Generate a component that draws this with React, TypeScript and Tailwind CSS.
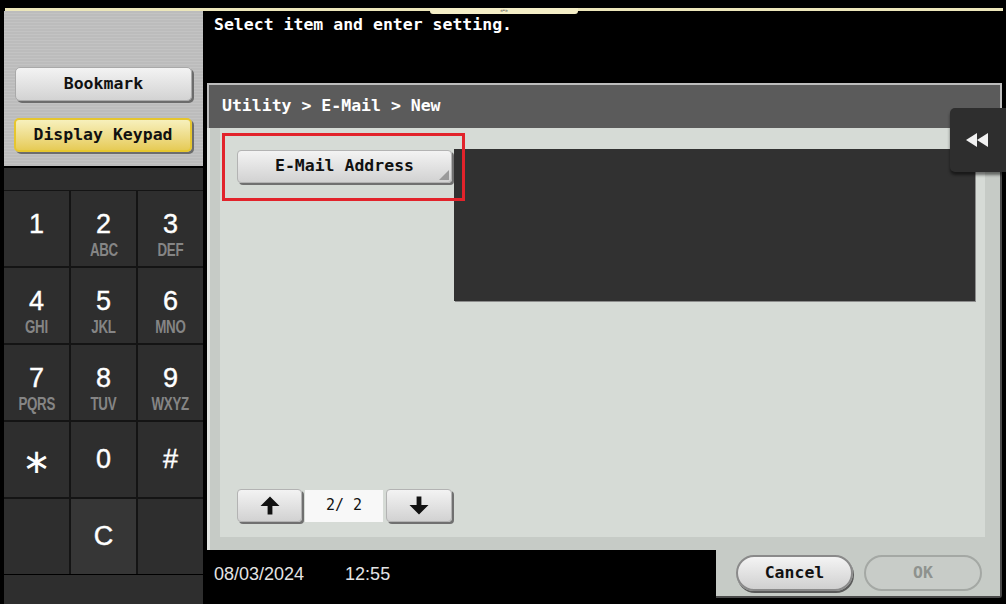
import React from "react";

const mono = "font-['DejaVu_Sans_Mono',monospace] font-bold";

// keypad layout, top to bottom
const digitKeys = [
  { d: "1", s: "" },
  { d: "2", s: "ABC" },
  { d: "3", s: "DEF" },
  { d: "4", s: "GHI" },
  { d: "5", s: "JKL" },
  { d: "6", s: "MNO" },
  { d: "7", s: "PQRS" },
  { d: "8", s: "TUV" },
  { d: "9", s: "WXYZ" },
];

const bottomKeys = [
  { d: "∗", big: true },
  { d: "0" },
  { d: "#" },
  { d: "" },
  { d: "C", lit: true },
  { d: "" },
];

function UpArrow() {
  return (
    <svg width="20" height="19" viewBox="0 0 20 19">
      <path d="M10 0.5 L19.5 10 H12.4 V18.5 H7.6 V10 H0.5 Z" fill="#111" />
    </svg>
  );
}

function DownArrow() {
  return (
    <svg width="20" height="19" viewBox="0 0 20 19">
      <path d="M10 18.5 L19.5 9 H12.4 V0.5 H7.6 V9 H0.5 Z" fill="#111" />
    </svg>
  );
}

function Rewind() {
  return (
    <svg width="22" height="14" viewBox="0 0 22 14">
      <path d="M11 0 L0 7 L11 14 Z" fill="#f2f2f2" />
      <path d="M22 0 L11 7 L22 14 Z" fill="#f2f2f2" />
    </svg>
  );
}

export default function App() {
  return (
    <div className="relative w-[1006px] h-[604px] overflow-hidden bg-black flex flex-col font-['Liberation_Sans',sans-serif]">
      {/* top strip */}
      <div className="h-[8px] shrink-0" />
      <div className="relative h-[3px] shrink-0 ml-[5px] mr-[3px] bg-[#ece6ba]">
        <div className="absolute left-[425px] top-0 w-[148px] h-[6px] bg-[#f4eec6] rounded-b-[3px] flex justify-center">
          <span className="text-[5px] leading-none text-[#555]">«•»</span>
        </div>
      </div>

      <div className="flex flex-1 min-h-0">
        {/* Left column */}
        <div className="w-[206px] shrink-0 flex flex-col pl-[4px] pr-[3px]">
          <div className="h-[155px] shrink-0 flex flex-col pt-[56px] pl-[10px] pr-[11px] gap-[17px] bg-[repeating-linear-gradient(0deg,#bcbcbc_0px,#bcbcbc_2px,#c3c3c3_2px,#c3c3c3_3px)]">
            <div className={`h-[34px] ml-[1px] flex items-center justify-center rounded-[5px] border border-[#a9a9a9] bg-linear-to-b from-[#f3f3f3] to-[#d3d3d3] shadow-[2px_2px_0_#6c6c6c] text-[16.5px] text-[#111] ${mono}`}>
              Bookmark
            </div>
            <div className={`h-[34px] flex items-center justify-center rounded-[5px] border-2 border-[#e6c62e] bg-linear-to-b from-[#f7f0bc] to-[#e6cb55] shadow-[2px_2px_0_#6c6c6c] text-[16.5px] text-[#111] ${mono}`}>
              Display Keypad
            </div>
          </div>
          <div className="h-[2px] shrink-0" />
          <div className="h-[22px] shrink-0 bg-[#2d2d2d]" />
          <div className="grid grid-cols-3 gap-[2px] pt-[1px] shrink-0 bg-[#141414]">
            {digitKeys.map((k) => (
              <div key={k.d} className="h-[75px] bg-[#2e2e2e] flex flex-col items-center pt-[20px]">
                <span className="text-[27px] leading-none text-white [-webkit-text-stroke:0.4px_white]">{k.d}</span>
                <span className="mt-[3px] text-[18px] leading-none font-bold text-[#858585] scale-x-[0.74] tracking-[-0.4px]">{k.s}</span>
              </div>
            ))}
            {bottomKeys.map((k, i) => (
              <div
                key={i}
                className={`h-[75px] flex items-center justify-center text-white ${k.lit ? "bg-[#363636]" : "bg-[#2e2e2e]"}`}
              >
                {k.big ? (
                  <span className="text-[34px] leading-none font-['DejaVu_Sans',sans-serif] mt-[2px]">{k.d}</span>
                ) : (
                  <span className="text-[27px] leading-none [-webkit-text-stroke:0.4px_white]">{k.d}</span>
                )}
              </div>
            ))}
          </div>
          <div className="h-[1px] shrink-0" />
          <div className="flex-1 bg-[#2e2e2e]" />
        </div>

        {/* Main column */}
        <div className="flex-1 flex flex-col">
          <div className={`h-[72px] shrink-0 pl-[8px] pt-[6px] text-[16.5px] leading-none text-white ${mono}`}>
            Select item and enter setting.
          </div>

          <div className="flex-1 flex flex-col ml-[1px] mr-[4px] mb-[6px]">
            {/* title bar */}
            <div className={`h-[45px] shrink-0 flex items-center pl-[13px] border-t-[2px] border-x-[2px] border-[#bdbdbd] bg-[#5b5b5b] text-[16.5px] text-white ${mono}`}>
              Utility &gt; E-Mail &gt; New
            </div>

            {/* body */}
            <div className="flex-1 flex flex-col bg-[#c6cbc6] border-l-[3px] border-l-[#e2e5e2] border-r-[2px] border-r-[#4a4a4a] pl-[10px] pr-[15px] pb-[13px]">
              <div className="relative flex-1 flex flex-col justify-between bg-[#d6dbd6] pt-[21px] pl-[17px] pr-[10px] pb-[15px]">
                <div className="flex items-start">
                  <div className={`relative mt-[1px] w-[215px] h-[33px] flex items-center justify-center rounded-[4px] border border-[#b3b3b3] bg-linear-to-b from-[#f3f3f3] to-[#d2d2d2] shadow-[2px_2px_0_#707070] text-[16.5px] text-[#111] ${mono}`}>
                    E-Mail Address
                    <svg className="absolute right-[2px] bottom-[2px]" width="10" height="10" viewBox="0 0 10 10">
                      <path d="M10 0 L10 10 L0 10 Z" fill="#9a9a9a" />
                    </svg>
                  </div>
                  <div className="ml-[2px] flex-1 h-[152px] bg-[#313131] shadow-[1px_1px_0_#8c8c8c]" />
                </div>

                <div className="flex items-center gap-[3px]">
                  <div className="w-[65px] h-[33px] flex items-center justify-center rounded-[4px] border border-[#b3b3b3] bg-linear-to-b from-[#f3f3f3] to-[#d2d2d2] shadow-[2px_2px_0_#707070]">
                    <UpArrow />
                  </div>
                  <div className={`w-[78px] h-[32px] flex items-center justify-center bg-[#f8f8f8] text-[15px] text-[#111] whitespace-pre font-['DejaVu_Sans_Mono',monospace]`}>
                    2/ 2
                  </div>
                  <div className="w-[66px] h-[33px] flex items-center justify-center rounded-[4px] border border-[#b3b3b3] bg-linear-to-b from-[#f3f3f3] to-[#d2d2d2] shadow-[2px_2px_0_#707070]">
                    <DownArrow />
                  </div>
                </div>

                {/* highlight box */}
                <div className="absolute left-[2px] top-[5px] w-[243px] h-[68px] border-[3px] border-[#e2232b]" />
              </div>
            </div>

            {/* bottom row */}
            <div className="h-[48px] shrink-0 flex">
              <div className="flex-1 flex items-center pl-[7px] gap-[41px] text-[18px] text-[#e4e4e4]">
                <span>08/03/2024</span>
                <span>12:55</span>
              </div>
              <div className="w-[286px] flex items-center gap-[11px] pl-[20px] bg-[#c6cbc6] border-r-[2px] border-b-[2px] border-[#4a4a4a] rounded-br-[3px]">
                <div className={`w-[117px] h-[36px] flex items-center justify-center rounded-full border-2 border-[#8a8a8a] bg-linear-to-b from-[#f4f4f4] to-[#d0d0d0] shadow-[1px_2px_0_#5a5a5a] text-[16.5px] text-[#111] ${mono}`}>
                  Cancel
                </div>
                <div className={`w-[118px] h-[36px] flex items-center justify-center rounded-full border-2 border-[#a4a8a4] bg-[#c8ccc8] text-[16.5px] text-[#8e928e] ${mono}`}>
                  OK
                </div>
              </div>
            </div>
          </div>
        </div>
      </div>

      {/* side tab */}
      <div className="absolute left-[950px] top-[108px] w-[56px] h-[64px] flex items-center pl-[16px] bg-[#2e2e2e] rounded-l-[5px] shadow-[0_3px_3px_rgba(0,0,0,0.5)]">
        <Rewind />
      </div>
    </div>
  );
}
